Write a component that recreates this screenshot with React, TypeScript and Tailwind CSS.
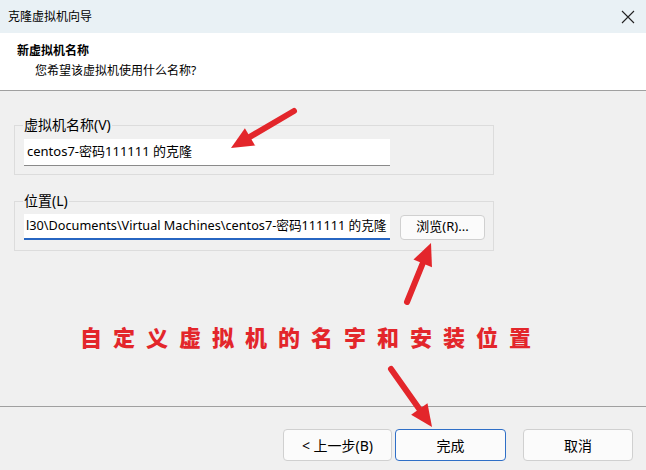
import React from 'react';

const ui = { fontFamily: '"Noto Sans", "Noto Sans CJK SC", sans-serif' };

function Arrow({ x1, y1, x2, y2 }: { x1: number; y1: number; x2: number; y2: number }) {
  // shaft ends a bit before the tip, head is a filled triangle
  const dx = x2 - x1;
  const dy = y2 - y1;
  const len = Math.hypot(dx, dy);
  const ux = dx / len;
  const uy = dy / len;
  const head = 22;
  const half = 10;
  const bx = x2 - ux * head;
  const by = y2 - uy * head;
  const px = -uy * half;
  const py = ux * half;
  return (
    <g>
      <line x1={x1} y1={y1} x2={bx + ux * 4} y2={by + uy * 4} stroke="#e3262b" strokeWidth={6} strokeLinecap="round" />
      <polygon points={`${x2},${y2} ${bx + px},${by + py} ${bx - px},${by - py}`} fill="#e3262b" />
    </g>
  );
}

export default function App() {
  return (
    <div className="relative w-[646px] h-[470px] overflow-hidden bg-[#f0f0f0] text-[12px] text-black" style={ui}>
      {/* title bar */}
      <div className="flex h-[33px] items-center justify-between bg-[#e9f1f5] pl-[8px] pr-[10px]">
        <span className="text-[12px]">克隆虚拟机向导</span>
        <svg width="14" height="14" viewBox="0 0 14 14" className="mr-[1px]">
          <path d="M1 1 L13 13 M13 1 L1 13" stroke="#222" strokeWidth="1.1" />
        </svg>
      </div>

      {/* header */}
      <div className="h-[58px] border-b border-[#a0a0a0] bg-white pl-[17px] pt-[8px]">
        <div className="text-[12px] font-bold leading-[19px]">新虚拟机名称</div>
        <div className="pl-[18px] text-[12px] leading-[22px]">您希望该虚拟机使用什么名称?</div>
      </div>

      {/* body */}
      <div className="h-[315px] pl-[14px] pt-[34px]">
        <div className="relative h-[50px] w-[480px] border border-[#dcdcdc]">
          <span className="absolute -top-[11px] left-[8px] bg-[#f0f0f0] px-[1px] text-[14px] leading-[20px]">虚拟机名称(V)</span>
          <div className="ml-[9px] mt-[13px] flex h-[27px] w-[366px] items-center border-b border-[#8a8a8a] bg-white pl-[3px] text-[13px]">
            centos7-密码111111 的克隆
          </div>
        </div>

        <div className="relative mt-[26px] h-[50px] w-[480px] border border-[#dcdcdc]">
          <span className="absolute -top-[11px] left-[8px] bg-[#f0f0f0] px-[1px] text-[14px] leading-[20px]">位置(L)</span>
          <div className="ml-[9px] mt-[12px] flex items-center gap-[10px]">
            <div className="flex h-[26px] w-[366px] items-center overflow-hidden whitespace-nowrap border-b-2 border-[#2766c2] bg-white pl-[2px] text-[12.7px]">
              l30\Documents\Virtual Machines\centos7-密码111111 的克隆
            </div>
            <button className="flex h-[25px] w-[85px] items-center justify-center rounded-[4px] border border-[#d0d0d0] bg-[#fbfbfb] text-[13px]">
              浏览(R)...
            </button>
          </div>
        </div>

        <div
          className="ml-[66px] mt-[72px] text-[22px] font-black leading-[26px] tracking-[11px] text-[#e3262b]"
          style={{ fontFamily: '"Noto Sans CJK SC", sans-serif' }}
        >
          自定义虚拟机的名字和安装位置
        </div>
      </div>

      {/* footer */}
      <div className="flex h-[64px] items-start border-t border-[#a0a0a0] pl-[283px] pt-[22px]">
        <button className="flex h-[32px] w-[109px] items-center justify-center rounded-[4px] border border-[#d0d0d0] bg-[#fbfbfb] text-[14px]">
          &lt; 上一步(B)
        </button>
        <button className="ml-[3px] flex h-[32px] w-[111px] items-center justify-center rounded-[4px] border border-[#2f6fc7] bg-[#fbfbfb] text-[14px]">
          完成
        </button>
        <button className="ml-[17px] flex h-[32px] w-[110px] items-center justify-center rounded-[4px] border border-[#d0d0d0] bg-[#fbfbfb] text-[14px]">
          取消
        </button>
      </div>

      {/* annotation arrows */}
      <svg className="pointer-events-none absolute left-0 top-0" width="646" height="470">
        <Arrow x1={294} y1={111} x2={231} y2={148} />
        <Arrow x1={407} y1={302} x2={431} y2={243} />
        <Arrow x1={391} y1={369} x2={432} y2={427} />
      </svg>
    </div>
  );
}
